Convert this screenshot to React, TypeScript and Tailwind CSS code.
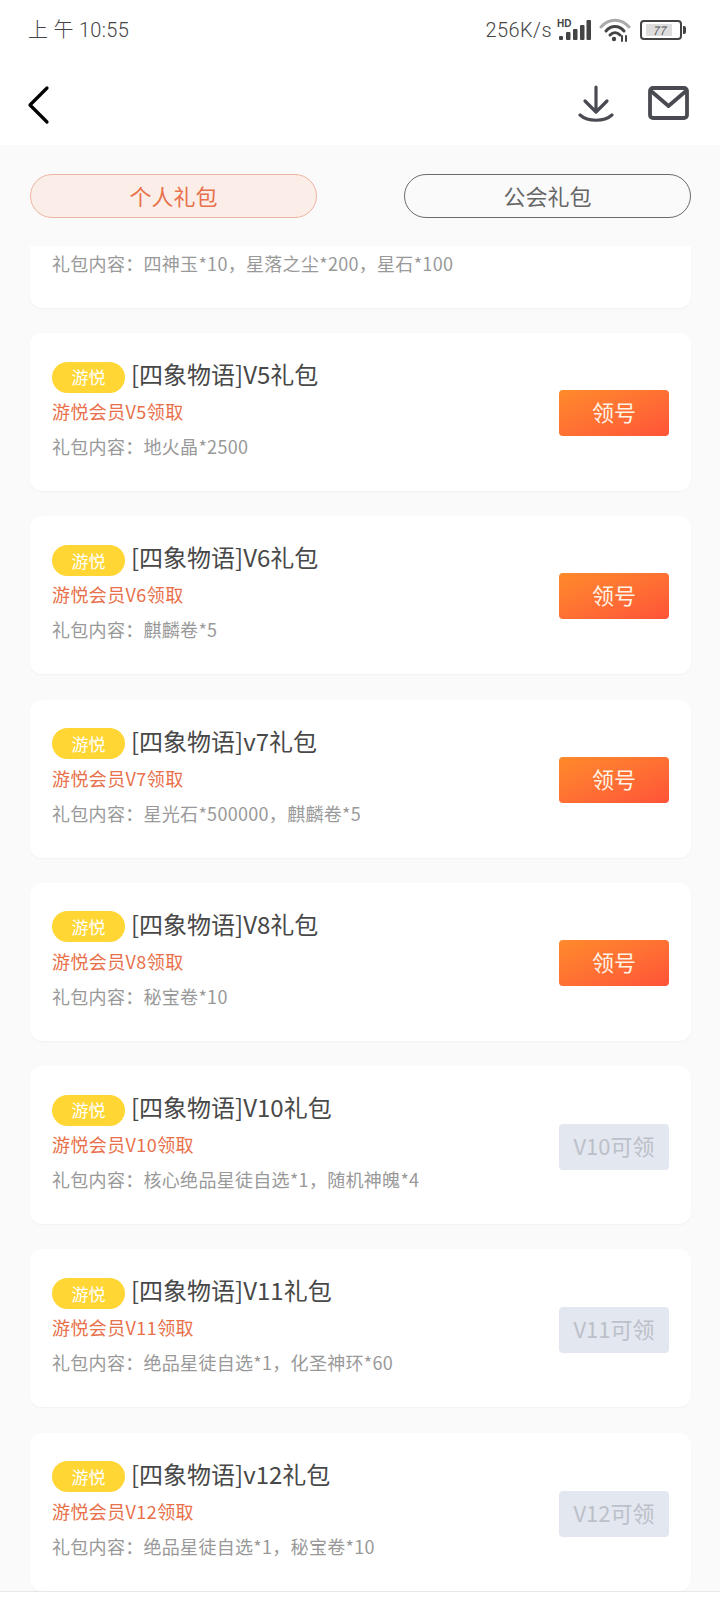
import React from 'react';

type Gift = {
  title: string;
  level: string;
  content: string;
  action: string;
  active: boolean;
};

const gifts: Gift[] = [
  { title: '[四象物语]V5礼包', level: '游悦会员V5领取', content: '礼包内容\uFF1A地火晶*2500', action: '领号', active: true },
  { title: '[四象物语]V6礼包', level: '游悦会员V6领取', content: '礼包内容\uFF1A麒麟卷*5', action: '领号', active: true },
  { title: '[四象物语]v7礼包', level: '游悦会员V7领取', content: '礼包内容\uFF1A星光石*500000\uFF0C麒麟卷*5', action: '领号', active: true },
  { title: '[四象物语]V8礼包', level: '游悦会员V8领取', content: '礼包内容\uFF1A秘宝卷*10', action: '领号', active: true },
  { title: '[四象物语]V10礼包', level: '游悦会员V10领取', content: '礼包内容\uFF1A核心绝品星徒自选*1\uFF0C随机神魄*4', action: 'V10可领', active: false },
  { title: '[四象物语]V11礼包', level: '游悦会员V11领取', content: '礼包内容\uFF1A绝品星徒自选*1\uFF0C化圣神环*60', action: 'V11可领', active: false },
  { title: '[四象物语]v12礼包', level: '游悦会员V12领取', content: '礼包内容\uFF1A绝品星徒自选*1\uFF0C秘宝卷*10', action: 'V12可领', active: false },
];

const SignalIcon = () => (
  <div className="relative h-[22px] w-[34px]">
    <svg width="34" height="22" viewBox="0 0 34 22" fill="#444">
      <rect x="2" y="17" width="4" height="4" rx="1" />
      <rect x="9" y="13" width="4.5" height="8" rx="1" />
      <rect x="16" y="10" width="4.5" height="11" rx="1" />
      <rect x="23" y="6" width="4.5" height="15" rx="1" />
      <rect x="29.5" y="1" width="4.5" height="20" rx="1" />
    </svg>
    <span className="absolute left-0 top-[1px] font-['Liberation_Sans',sans-serif] text-[10px] font-bold leading-[8px] text-[#444]">
      HD
    </span>
  </div>
);

const WifiIcon = () => (
  <svg width="32" height="24" viewBox="0 0 32 24" fill="none" strokeLinecap="round">
    <path d="M2 9C10 0 22 0 30 9" stroke="#aaa" strokeWidth="3" />
    <path d="M7 13C12 7 20 7 25 13" stroke="#444" strokeWidth="3" />
    <path d="M11 17C14 14 18 14 21 17" stroke="#444" strokeWidth="3" />
    <circle cx="15" cy="21" r="2.2" fill="#444" />
    <path d="M23 18V23M27 18V23" stroke="#444" strokeWidth="2" />
  </svg>
);

const BatteryIcon = () => (
  <div className="flex items-center">
    <div className="flex h-[20px] w-[42px] items-center rounded-[4px] border-2 border-[#444] px-[4px]">
      <div className="flex h-[12px] w-[26px] items-center justify-center bg-[#ddd] text-[12px] italic leading-none text-[#555]">
        77
      </div>
    </div>
    <div className="ml-[1px] h-[8px] w-[3px] rounded-r-[2px] bg-[#444]" />
  </div>
);

const GiftCard = ({ gift }: { gift: Gift }) => (
  <div className="flex h-[158px] items-center justify-between rounded-[12px] bg-white pl-[22px] pr-[22px] shadow-[0_1px_2px_rgba(0,0,0,0.04)]">
    <div className="pb-[5px]">
      <div className="flex h-[32px] items-center">
        <span className="flex h-[31px] w-[73px] items-center justify-center rounded-full bg-[#ffd633] text-[17px] text-white">
          游悦
        </span>
        <span className="ml-[6px] pb-[6px] text-[24px] leading-[32px] text-[#484848]">{gift.title}</span>
      </div>
      <div className="mt-[6px] h-[24px] text-[18px] leading-[24px] tracking-[0.4px] text-[#e8704a]">{gift.level}</div>
      <div className="mt-[11px] h-[24px] text-[18px] leading-[24px] tracking-[0.3px] text-[#999]">{gift.content}</div>
    </div>
    {gift.active ? (
      <button className="mt-[2px] h-[46px] w-[110px] rounded-[4px] bg-gradient-to-br from-[#ff8a2b] to-[#ff5238] pb-[3px] text-[22px] text-[#fff3e6]">
        {gift.action}
      </button>
    ) : (
      <button className="mt-[4px] h-[46px] w-[110px] rounded-[4px] bg-[#e3e7f0] pb-[3px] text-[22px] text-[#bcc0c8]">
        {gift.action}
      </button>
    )}
  </div>
);

const App: React.FC = () => {
  return (
    <div className="flex h-[1600px] w-[720px] flex-col overflow-hidden bg-[#fafafa] font-['Noto_Sans_CJK_SC','Noto_Sans',sans-serif]">
      <header className="h-[145px] bg-white">
        <div className="flex h-[60px] items-center justify-between pl-[28px] pr-[34px]">
          <span className="font-['Roboto','Noto_Sans_CJK_SC',sans-serif] text-[20px] font-light tracking-[0.3px] text-[#444]">上 午 10:55</span>
          <div className="flex items-center">
            <span className="font-['Roboto',sans-serif] text-[20px] font-light tracking-[0.4px] text-[#444]">256K/s</span>
            <div className="ml-[5px]"><SignalIcon /></div>
            <div className="ml-[8px]"><WifiIcon /></div>
            <div className="ml-[9px]"><BatteryIcon /></div>
          </div>
        </div>
        <div className="flex h-[85px] items-start justify-between pl-[27px] pr-[31px] pt-[25px]">
          <svg width="24" height="40" viewBox="0 0 24 40" fill="none" stroke="#000" strokeWidth="3.2" strokeLinecap="round" strokeLinejoin="round">
            <path d="M20 3L3 20L20 37" />
          </svg>
          <div className="flex items-start">
            <svg width="36" height="38" viewBox="0 0 36 38" fill="none" stroke="#4a4a52" strokeWidth="3.2" strokeLinecap="round" strokeLinejoin="round">
              <path d="M18 2V26M7 16L18 27L29 16" />
              <path d="M2 30C10 37 26 37 34 30" />
            </svg>
            <svg className="ml-[34px] mt-[1px]" width="41" height="34" viewBox="0 0 41 34" fill="none" stroke="#4a4a52" strokeWidth="3.8" strokeLinecap="round" strokeLinejoin="round">
              <rect x="2" y="2" width="37" height="30" rx="3" />
              <path d="M3 5L20.5 20L38 5" />
            </svg>
          </div>
        </div>
      </header>

      <div className="flex justify-between pl-[30px] pr-[29px] pt-[29px]">
        <div className="flex h-[44px] w-[287px] items-center justify-center rounded-full border border-[#f0b5a0] bg-[#fbeee9] pb-[2px] text-[22px] text-[#e8704a]">
          个人礼包
        </div>
        <div className="flex h-[44px] w-[287px] items-center justify-center rounded-full border border-[#6b6b6b] pb-[2px] text-[22px] text-[#666]">
          公会礼包
        </div>
      </div>

      <div className="flex flex-1 flex-col overflow-hidden pl-[30px] pr-[29px] pt-[28px]">
        <div className="h-[62px] shrink-0 rounded-b-[12px] bg-white pl-[22px] pt-[5px] text-[18px] leading-[24px] tracking-[0.3px] text-[#999] shadow-[0_1px_2px_rgba(0,0,0,0.04)]">
          {'礼包内容\uFF1A四神玉*10\uFF0C星落之尘*200\uFF0C星石*100'}
        </div>
        <div className="mt-[25px] flex shrink-0 flex-col gap-[25.3px]">
          {gifts.map((gift) => (
            <GiftCard key={gift.title} gift={gift} />
          ))}
        </div>
      </div>

      <div className="h-[9px] shrink-0 border-t border-[#e8e8e8] bg-white" />
    </div>
  );
};

export default App;
